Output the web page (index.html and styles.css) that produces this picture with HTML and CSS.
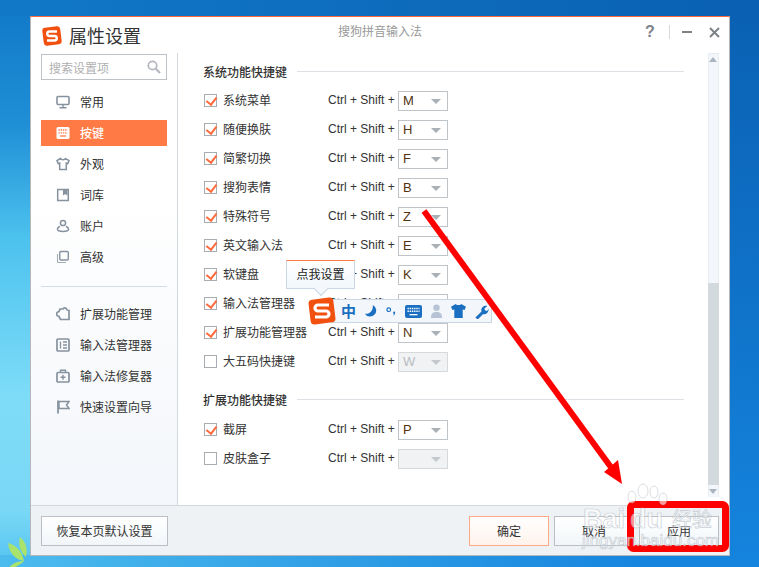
FILE: index.html
```html
<!DOCTYPE html>
<html lang="zh">
<head>
<meta charset="utf-8">
<title>属性设置</title>
<link rel="stylesheet" href="styles.css">
</head>
<body>
<svg class="leaf" width="60" height="40" viewBox="0 0 60 40"><path d="M8 8c8 2 14 8 16 18-8-1-15-8-16-18zM20 2c6 5 8 12 6 20-6-5-8-12-6-20zM24 26c-4 4-9 7-16 8 3-5 9-8 16-8z" fill="#a9e36b"/></svg>
<div class="window">
  <header class="titlebar">
    <div class="brand">
      <svg class="logo" width="22" height="22" viewBox="0 0 22 22"><rect x="2" y="2" width="18" height="18" rx="3" fill="#f2500f" transform="rotate(-7 11 11)"/><path d="M16 6.500H8.500a1.800 1.800 0 0 0 0 4.500h5a1.800 1.800 0 0 1 0 4.500H6" fill="none" stroke="#fff" stroke-width="2.400"/></svg>
      <span class="brand-name">属性设置</span>
    </div>
    <div class="app-name">搜狗拼音输入法</div>
    <div class="win-ctrl">
      <span class="help">?</span>
      <span class="sep"></span>
      <span class="min"></span>
      <svg width="11" height="11" viewBox="0 0 11 11"><path d="M1 1l9 9M10 1l-9 9" stroke="#7d8287" stroke-width="2"/></svg>
    </div>
  </header>
  <div class="main">
    <aside class="sidebar">
      <div class="search"><span>搜索设置项</span>
        <svg width="14" height="14" viewBox="0 0 14 14"><circle cx="5.500" cy="5.500" r="4.200" fill="none" stroke="#b4b9bf" stroke-width="1.800"/><path d="M8.800 8.800l4.200 4.200" stroke="#b4b9bf" stroke-width="2.200"/></svg>
      </div>
      <nav class="nav">
        <a class="nav-item"><svg class="ic" viewBox="0 0 14 14"><rect x="1" y="1.500" width="12" height="8" rx="1" fill="none" stroke="#86929e" stroke-width="1.600"/><path d="M7 10v2M3.500 12.800h7" stroke="#86929e" stroke-width="1.400"/></svg>常用</a>
        <a class="nav-item active"><svg class="ic" viewBox="0 0 14 14"><rect x="0.500" y="1" width="13" height="12" rx="1.500" fill="#fff"/><path d="M2.500 4h9M2.500 6.800h9" stroke="#ff7a45" stroke-width="1.300" stroke-dasharray="1.400 .8"/><path d="M4 10h6" stroke="#ff7a45" stroke-width="1.300"/></svg>按键</a>
        <a class="nav-item"><svg class="ic" viewBox="0 0 14 14"><path d="M4.500 1.500L1 3.500l1.200 3 1.500-.5v6.500h6.600V6l1.500.5 1.200-3-3.500-2c-.5 1.700-4.500 1.700-5 0z" fill="none" stroke="#86929e" stroke-width="1.500"/></svg>外观</a>
        <a class="nav-item"><svg class="ic" viewBox="0 0 14 14"><rect x="1.700" y="1.500" width="10.600" height="11" fill="none" stroke="#86929e" stroke-width="1.500"/><path d="M7 2h4.500v5.500L9.200 6 7 7.500z" fill="#86929e"/></svg>词库</a>
        <a class="nav-item"><svg class="ic" viewBox="0 0 14 14"><circle cx="7" cy="4" r="2.600" fill="none" stroke="#86929e" stroke-width="1.500"/><path d="M4 7.500C2.500 8 1.500 9 1.500 10.300c0 1.400 2 2.200 5.500 2.200s5.500-.8 5.500-2.200C12.500 9 11.500 8 10 7.500" fill="none" stroke="#86929e" stroke-width="1.500"/></svg>账户</a>
        <a class="nav-item"><svg class="ic" viewBox="0 0 14 14"><rect x="3.800" y="1.500" width="8.500" height="8.500" rx="1" fill="none" stroke="#86929e" stroke-width="1.400"/><path d="M1.500 4v7.500a1 1 0 0 0 1 1H10" fill="none" stroke="#a5aeb6" stroke-width="1.100"/></svg>高级</a>
      </nav>
      <div class="divider"></div>
      <nav class="nav">
        <a class="nav-item"><svg class="ic" viewBox="0 0 14 14"><path d="M4 2h3c.5-1.500 3-1.500 3.500 0 .3 1 0 1.500 2.500 1.500v9H4.500l-1.500-3c-1.500-.5-2.500-1-2.500-2.500S1.500 5 3 4.500z" fill="none" stroke="#86929e" stroke-width="1.700"/></svg>扩展功能管理</a>
        <a class="nav-item"><svg class="ic" viewBox="0 0 14 14"><rect x="1" y="1" width="12" height="12" rx="1" fill="none" stroke="#86929e" stroke-width="1.700"/><path d="M4.500 3.500v7M7 4h4M7 7h4M7 10h4" stroke="#86929e" stroke-width="1.300"/></svg>输入法管理器</a>
        <a class="nav-item"><svg class="ic" viewBox="0 0 14 14"><rect x="1" y="3.500" width="12" height="9.500" rx="1" fill="none" stroke="#86929e" stroke-width="1.700"/><path d="M4.500 3.500V1.200h5v2.300M7 5.800v5M4.500 8.300h5" fill="none" stroke="#86929e" stroke-width="1.400"/></svg>输入法修复器</a>
        <a class="nav-item"><svg class="ic" viewBox="0 0 14 14"><path d="M2 0.500v13" stroke="#86929e" stroke-width="1.800"/><path d="M3 1.500h10L10.500 5 13 8.500H3z" fill="none" stroke="#86929e" stroke-width="1.500"/></svg>快速设置向导</a>
      </nav>
    </aside>
    <section class="content">
      <div class="panel">
        <h2 class="sec-title"><span>系统功能快捷键</span></h2>
        <div class="row"><i class="check on"></i><span class="label">系统菜单</span><span class="combo-text">Ctrl + Shift +</span><span class="combo">M</span></div>
        <div class="row"><i class="check on"></i><span class="label">随便换肤</span><span class="combo-text">Ctrl + Shift +</span><span class="combo">H</span></div>
        <div class="row"><i class="check on"></i><span class="label">简繁切换</span><span class="combo-text">Ctrl + Shift +</span><span class="combo">F</span></div>
        <div class="row"><i class="check on"></i><span class="label">搜狗表情</span><span class="combo-text">Ctrl + Shift +</span><span class="combo">B</span></div>
        <div class="row"><i class="check on"></i><span class="label">特殊符号</span><span class="combo-text">Ctrl + Shift +</span><span class="combo">Z</span></div>
        <div class="row"><i class="check on"></i><span class="label">英文输入法</span><span class="combo-text">Ctrl + Shift +</span><span class="combo">E</span></div>
        <div class="row"><i class="check on"></i><span class="label">软键盘</span><span class="combo-text">Ctrl + Shift +</span><span class="combo">K</span></div>
        <div class="row"><i class="check on"></i><span class="label">输入法管理器</span><span class="combo-text">Ctrl + Shift +</span><span class="combo">L</span></div>
        <div class="row"><i class="check on"></i><span class="label">扩展功能管理器</span><span class="combo-text">Ctrl + Shift +</span><span class="combo">N</span></div>
        <div class="row"><i class="check"></i><span class="label">大五码快捷键</span><span class="combo-text">Ctrl + Shift +</span><span class="combo off">W</span></div>
        <h2 class="sec-title second"><span>扩展功能快捷键</span></h2>
        <div class="row"><i class="check on"></i><span class="label">截屏</span><span class="combo-text">Ctrl + Shift +</span><span class="combo">P</span></div>
        <div class="row"><i class="check"></i><span class="label">皮肤盒子</span><span class="combo-text">Ctrl + Shift +</span><span class="combo off"></span></div>
      </div>
      <div class="scrollbar">
        <div class="arrow-up"></div>
        <div class="track"><div class="thumb"></div></div>
        <div class="arrow-down"></div>
      </div>
    </section>
  </div>
  <footer class="footer">
    <button class="btn restore">恢复本页默认设置</button>
    <div class="actions">
      <button class="btn primary">确定</button>
      <button class="btn">取消</button>
      <button class="btn">应用</button>
    </div>
  </footer>
</div>
<div class="tip">点我设置</div>
<div class="ime">
  <svg class="ime-logo" width="30" height="30" viewBox="0 0 30 30"><rect x="2.500" y="2.500" width="25" height="25" rx="4" fill="#f2500f" transform="rotate(-7 15 15)"/><path d="M22 9H11a2.800 2.800 0 0 0 0 6h8a2.800 2.800 0 0 1 0 6H8" fill="none" stroke="#fff" stroke-width="3.200"/></svg>
  <span class="ime-zh">中</span>
  <svg width="14" height="14" viewBox="0 0 16 16"><path d="M10 1a7 7 0 1 1-9 10c5 1.500 10-3.500 9-10z" fill="#1a6fc0"/></svg>
  <svg width="11" height="13" viewBox="0 0 12 14"><circle cx="3" cy="5" r="2" fill="none" stroke="#1a6fc0" stroke-width="1.300"/><path d="M9 7c1.500 0 1.500 3-1 5 0 0 1-2 0-3-.5-1 0-2 1-2z" fill="#1a6fc0"/></svg>
  <svg width="17" height="13" viewBox="0 0 17 13"><rect x="0" y="0" width="17" height="13" rx="2" fill="#1a6fc0"/><path d="M2.500 3.500h12M2.500 6.300h12" stroke="#fff" stroke-width="1.400" stroke-dasharray="1.400 .8"/><path d="M4.500 9.700h8" stroke="#fff" stroke-width="1.300"/></svg>
  <svg width="13" height="15" viewBox="0 0 14 16"><circle cx="7" cy="4" r="3.500" fill="#b7c4d6"/><path d="M1 15c0-5 2-6.500 6-6.500s6 1.500 6 6.500z" fill="#b7c4d6"/></svg>
  <svg width="15" height="14" viewBox="0 0 16 15"><path d="M5 0L0 3l1.500 3.500L3.500 6v9h9V6l2 .5L16 3l-5-3c-.5 1.500-5.500 1.500-6 0z" fill="#1a6fc0"/></svg>
  <svg width="15" height="15" viewBox="0 0 16 16"><path d="M1.500 14.500L8 8c-1-3 1.500-6.500 6-6l-3 3 1 2 2 .5 1.500-2.500c.5 4-3 6.500-6 6l-5.500 5.500z" fill="#1a6fc0"/></svg>
</div>
<svg class="annot" width="759" height="567" viewBox="0 0 759 567">
  <path d="M424 211L613 470" stroke="#f00" stroke-width="6"/>
  <path d="M622 484L604 472L618 460z" fill="#f00"/>
  <rect x="630.500" y="504.500" width="95" height="44" rx="3" fill="none" stroke="#f00" stroke-width="7"/>
  <g class="wm">
    <ellipse cx="632" cy="497" rx="4" ry="6"/><ellipse cx="643" cy="491" rx="5" ry="7"/><ellipse cx="654" cy="492" rx="4" ry="6"/><ellipse cx="663" cy="499" rx="4" ry="6"/>
    <text x="583" y="528" class="wm-big">Bai</text>
    <text x="630" y="528" class="wm-big">du</text>
    <text x="672" y="527" class="wm-cn">经验</text>
    <text x="582" y="546" class="wm-small">jingyan.baidu.com</text>
  </g>
</svg>
</body>
</html>
```

FILE: styles.css
```css
* { box-sizing: border-box; }
html, body { margin: 0; padding: 0; }
body {
  position: relative;
  width: 759px;
  height: 567px;
  overflow: hidden;
  font-family: "Noto Sans CJK SC", "Liberation Sans", sans-serif;
  font-size: 12px;
  color: #333;
  background:
    linear-gradient(90deg, #1178c8, #0a60b2) top / 100% 16px no-repeat,
    linear-gradient(180deg, #0a60b2, #0f72c8 50%, #1584de) right / 30px 100% no-repeat,
    linear-gradient(90deg, #4cbcee, #1584de 85%) bottom / 100% 12px no-repeat,
    linear-gradient(180deg, #1178c8 0%, #1f8fd6 22%, #4cc2ee 42%, #7edcf8 70%, #7ad8f6 90%, #52c2f0 100%);
}
.leaf { position: absolute; left: 0; top: 535px; }
.window {
  position: absolute;
  left: 30px;
  top: 16px;
  width: 700px;
  height: 540px;
  display: flex;
  flex-direction: column;
  background: #fff;
  border: 1px solid #b4b8bc;
  border-top: 1px solid #ff6a3c;
}
.titlebar {
  height: 36px;
  flex: none;
  display: flex;
  align-items: center;
  position: relative;
  padding: 2px 9px 0 10px;
}
.brand { display: flex; align-items: center; gap: 6px; }
.brand-name { font-size: 18px; color: #333; line-height: 22px; padding-bottom: 2px; }
.app-name {
  position: absolute;
  left: 0;
  right: 0;
  top: 5px;
  text-align: center;
  font-size: 12px;
  color: #999;
}
.win-ctrl { margin-left: auto; margin-top: -8px; display: flex; align-items: center; gap: 0; }
.help { font: bold 16px "Liberation Sans", sans-serif; color: #7d8287; width: 12px; }
.sep { width: 1px; height: 14px; background: #d8d8d8; margin: 0 12px 0 12px; }
.min { width: 10px; height: 2px; background: #7d8287; margin-right: 17px; }
.main { flex: 1; display: flex; min-height: 0; }
.sidebar {
  width: 147px;
  flex: none;
  padding: 1px 10px 0;
  border-right: 1px solid #d3d8dd;
  background: linear-gradient(180deg, #fff 0%, #fff 30%, #f3f6fa 100%);
}
.search {
  height: 26px;
  border: 1px solid #bec3c8;
  display: flex;
  align-items: center;
  justify-content: space-between;
  padding: 0 5px 0 7px;
  color: #b0b0b0;
  background: #fff;
  margin-bottom: 9px;
}
.nav { display: flex; flex-direction: column; gap: 5px; }
.nav-item {
  height: 26px;
  display: flex;
  align-items: center;
  gap: 10px;
  padding: 0 0 2px 15px;
  color: #333;
}
.nav-item.active { background: #ff7a45; color: #fff; font-weight: 500; }
.ic { width: 14px; height: 14px; flex: none; margin-top: 2px; }
.divider { height: 1px; background: #d6dde4; margin: 16px 0 14px; }
.content { flex: 1; display: flex; padding-right: 10px; min-width: 0; }
.panel { flex: 1; padding: 6px 24px 0 25px; min-width: 0; }
.sec-title {
  margin: 0 0 3px;
  height: 24px;
  display: flex;
  align-items: center;
  gap: 10px;
  font-size: 12px;
  font-weight: 500;
  color: #333;
}
.sec-title::after { content: ""; flex: 1; height: 1px; background: #dde1e6; }
.sec-title.second { margin-top: 11px; margin-bottom: 4px; }
.row { height: 29px; display: flex; align-items: center; color: #333; }
.check {
  width: 13px;
  height: 13px;
  border: 1px solid #a8adb2;
  background: #fff;
  margin: 0 6px 0 1px;
  flex: none;
  position: relative;
}
.check.on::after {
  content: "";
  position: absolute;
  left: 3px;
  top: 0;
  width: 5px;
  height: 8px;
  border: solid #ff6a3c;
  border-width: 0 2px 2px 0;
  transform: rotate(38deg);
}
.label { width: 105px; flex: none; padding-bottom: 2px; }
.combo-text { font-family: "Liberation Sans", sans-serif; font-size: 12px; width: 70px; flex: none; padding-bottom: 2px; }
.combo {
  width: 50px;
  height: 20px;
  border: 1px solid #bfc4c9;
  background: #fff;
  display: flex;
  align-items: center;
  padding-left: 4px;
  font-family: "Liberation Sans", sans-serif;
  font-size: 13px;
  color: #53330f;
  position: relative;
  flex: none;
}
.combo::after {
  content: "";
  position: absolute;
  right: 6px;
  top: 7px;
  border: solid transparent;
  border-width: 5px 5px 0;
  border-top-color: #a9b0b6;
}
.combo.off { background: #f1f2f4; color: #b8bcc0; border-color: #d6d9dc; }
.combo.off::after { border-top-color: #c5c9cd; }
.scrollbar {
  width: 11px;
  flex: none;
  display: flex;
  flex-direction: column;
  background: #f3f6fa;
  border: 1px solid #e7ecf1;
  border-bottom: 0;
  height: 444px;
}
.arrow-up, .arrow-down { height: 11px; flex: none; position: relative; }
.arrow-up::after, .arrow-down::after {
  content: "";
  position: absolute;
  left: 0;
  top: 3px;
  border: solid transparent;
  border-width: 0 4.500px 5px;
  border-bottom-color: #a8b4c0;
}
.arrow-down::after { border-width: 5px 4.500px 0; border-top-color: #a8b4c0; border-bottom-color: transparent; }
.track { flex: 1; padding-top: 218px; }
.thumb { height: 202px; background: #d3dade; margin: 0 -1px; }
.footer {
  height: 50px;
  flex: none;
  display: flex;
  align-items: center;
  justify-content: space-between;
  padding: 0 10px;
  background: #eef2f5;
  border-top: 1px solid #d5d9dd;
}
.actions { display: flex; gap: 5px; }
.btn {
  width: 80px;
  height: 30px;
  border: 1px solid #b9bfc4;
  background: linear-gradient(180deg, #fff, #f2f6f9);
  font: 12px "Noto Sans CJK SC", sans-serif;
  color: #333;
  padding: 0;
}
.btn.restore { width: 127px; }
.btn.primary { border-color: #ffa985; background: linear-gradient(180deg, #fff, #fff3ec); }
.tip {
  position: absolute;
  left: 286px;
  top: 260px;
  width: 69px;
  height: 29px;
  background: linear-gradient(180deg, #fff, #f2f7fc);
  border: 1px solid #c9d6e3;
  border-top: 1px solid #ff7a45;
  text-align: center;
  line-height: 25px;
  color: #222;
  font-size: 12px;
}
.tip::after {
  content: "";
  position: absolute;
  left: 29px;
  top: 23px;
  width: 9px;
  height: 9px;
  background: #f4f8fc;
  border: solid #c9d6e3;
  border-width: 0 1px 1px 0;
  transform: rotate(45deg);
}
.ime {
  position: absolute;
  left: 330px;
  top: 299px;
  width: 162px;
  height: 24px;
  background: #f3f7fc;
  border: 1px solid #c9d6e3;
  display: flex;
  align-items: center;
  gap: 8px;
  padding-left: 10px;
}
.ime-logo { position: absolute; left: -24px; top: -4px; }
.ime-zh { font-size: 15px; font-weight: 700; color: #1a6fc0; line-height: 20px; }
.annot { position: absolute; left: 0; top: 0; pointer-events: none; }
.wm { fill: rgba(255,255,255,0.6); stroke: rgba(165,175,185,0.6); stroke-width: 0.7px; }
.wm-big { font: bold 27px "Liberation Sans", sans-serif; }
.wm-cn { font: 20px "Noto Sans CJK SC", sans-serif; }
.wm-small { font: 17px "Liberation Sans", sans-serif; }
```
